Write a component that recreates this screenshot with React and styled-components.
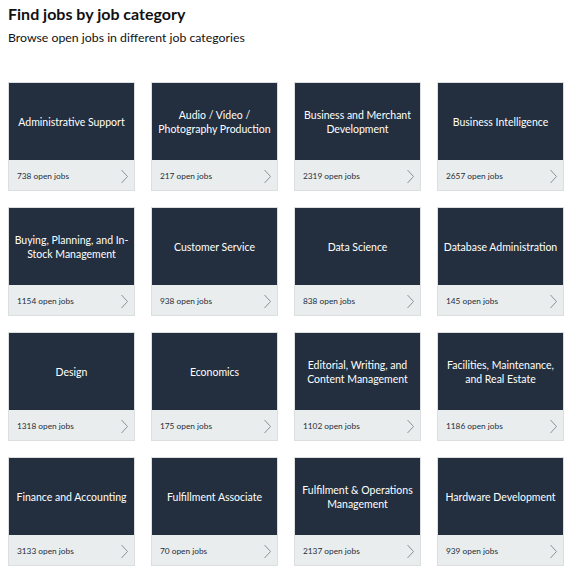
import React from "react";
import styled, { createGlobalStyle } from "styled-components";

const GlobalStyle = createGlobalStyle`
  body {
    margin: 0;
    background: #ffffff;
    font-family: Lato, "Open Sans", Arial, sans-serif;
    color: #111111;
  }
`;

const Page = styled.div`
  width: 570px;
  padding: 4px 8px 0 8px;
  box-sizing: border-box;
`;

const Title = styled.h2`
  margin: 0;
  font-size: 16px;
  font-weight: 700;
  line-height: 19px;
  color: #111111;
`;

const Subtitle = styled.p`
  margin: 6px 0 0 0;
  font-size: 12.3px;
  line-height: 17px;
  color: #111111;
`;

const Grid = styled.div`
  display: grid;
  grid-template-columns: repeat(4, 127px);
  column-gap: 16px;
  row-gap: 16px;
  margin-top: 36px;
`;

const Card = styled.a`
  display: flex;
  flex-direction: column;
  height: 109px;
  border: 1px solid #dcdfe0;
  box-sizing: border-box;
  text-decoration: none;
  cursor: pointer;
`;

const CardTop = styled.div`
  flex: 0 0 77px;
  display: flex;
  align-items: center;
  justify-content: center;
  background: #232f3e;
  color: #ffffff;
  text-align: center;
  font-size: 10.5px;
  line-height: 14px;
  padding: 0 2px;
  box-sizing: border-box;
`;

const CardBottom = styled.div`
  flex: 1;
  display: flex;
  align-items: center;
  justify-content: space-between;
  background: #eaeded;
  padding: 2px 5px 0 8px;
  font-size: 8.3px;
  color: #232f3e;
`;

const Chevron = () => (
  <svg width="9" height="15" viewBox="0 0 9 15" fill="none">
    <path d="M1.5 1 L7.5 7.5 L1.5 14" stroke="#8d9096" strokeWidth="1" />
  </svg>
);

const categories = [
  ["Administrative Support", 738],
  ["Audio / Video / Photography Production", 217],
  ["Business and Merchant Development", 2319],
  ["Business Intelligence", 2657],
  ["Buying, Planning, and In-Stock Management", 1154],
  ["Customer Service", 938],
  ["Data Science", 838],
  ["Database Administration", 145],
  ["Design", 1318],
  ["Economics", 175],
  ["Editorial, Writing, and Content Management", 1102],
  ["Facilities, Maintenance, and Real Estate", 1186],
  ["Finance and Accounting", 3133],
  ["Fulfillment Associate", 70],
  ["Fulfilment & Operations Management", 2137],
  ["Hardware Development", 939],
];

const App = () => {
  return (
    <Page>
      <GlobalStyle />
      <Title>Find jobs by job category</Title>
      <Subtitle>Browse open jobs in different job categories</Subtitle>
      <Grid>
        {categories.map(([name, count]) => (
          <Card key={name}>
            <CardTop>{name}</CardTop>
            <CardBottom>
              <span>{count} open jobs</span>
              <Chevron />
            </CardBottom>
          </Card>
        ))}
      </Grid>
    </Page>
  );
};

export default App;
